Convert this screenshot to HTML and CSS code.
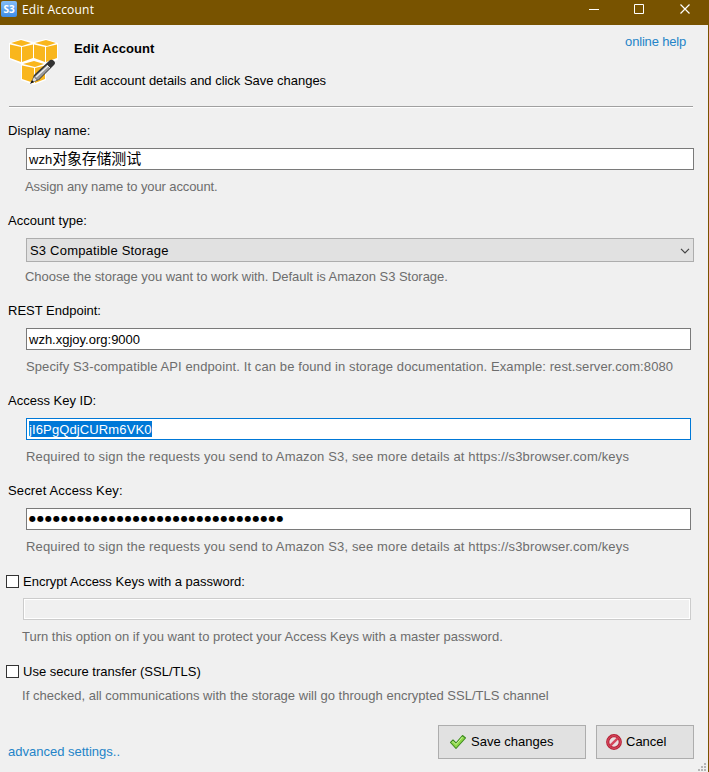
FILE: index.html
```html
<!DOCTYPE html>
<html lang="en">
<head>
<meta charset="utf-8">
<title>Edit Account</title>
<link rel="stylesheet" href="styles.css">
</head>
<body>
<div class="window">
  <header class="titlebar">
    <span class="app-icon">S3</span>
    <span class="title">Edit Account</span>
    <svg class="controls" width="120" height="24" viewBox="0 0 120 24" fill="none" stroke="#fff">
      <path d="M7 9.500h10M52.500 4.500h9v9h-9z"/>
      <path d="M98.500 4.500l9 9M107.500 4.500l-9 9" stroke-width="1.200"/>
    </svg>
  </header>
  <main class="body">
    <section class="intro">
      <svg class="logo" width="50" height="48" viewBox="0 0 50 48">
        <path d="M0 4L12 0l12.500 3L37 0l12 4v17L37 25v16l-12 5-13-5V25L0 20z" fill="#fff"/>
        <g fill="#f9b61d">
          <path d="M2 4l10-3 10 3-9 3zM26 4l11-3 10 3-9 3zM14 25l11-3 10 3-9 3z"/>
          <path d="M1 5.500l11 2.500v15L1 19zM13 8l11-2.500V19l-11 4zM25 5.500L36 8v15l-11-4zM37 8l11-2.500V19l-11 4zM13 26.500L25 29v15l-12-4zM26 29l10-2.500V40l-10 4z"/>
        </g>
        <path d="M22 44l3-8L41 21q2-1 4 1t0 4L30 41z" fill="#333"/>
        <path d="M25 38l13-12 3 3-12 12z" fill="#999"/>
        <path d="M27 38l12-11" stroke="#eee" stroke-width="1.500"/>
        <path d="M22 44l3-6 3 3z" fill="#ddd"/>
        <path d="M21 45l2-4 2 2z" fill="#111"/>
        <path d="M38 26l3 3" stroke="#ddd"/>
      </svg>
      <div class="intro-text">
        <h1>Edit Account</h1>
        <p>Edit account details and click Save changes</p>
      </div>
      <a class="help">online help</a>
    </section>
    <hr>
    <section class="field">
      <label>Display name:</label>
      <div class="input wide">wzh<span class="cjk">对象存储测试</span></div>
      <p class="hint name-hint">Assign any name to your account.</p>
    </section>
    <section class="field">
      <label>Account type:</label>
      <div class="select wide"><span>S3 Compatible Storage</span>
        <svg width="10" height="6" viewBox="0 0 10 6" fill="none" stroke="#444" stroke-width="1.200"><path d="M1 .8l4 4 4-4"/></svg>
      </div>
      <p class="hint type-hint">Choose the storage you want to work with. Default is Amazon S3 Storage.</p>
    </section>
    <section class="field">
      <label>REST Endpoint:</label>
      <div class="input">wzh.xgjoy.org:9000</div>
      <p class="hint endpoint-hint">Specify S3-compatible API endpoint. It can be found in storage documentation. Example: rest.server.com:8080</p>
    </section>
    <section class="field">
      <label>Access Key ID:</label>
      <div class="input focus"><span class="selected">jI6PgQdjCURm6VK0</span></div>
      <p class="hint key-hint">Required to sign the requests you send to Amazon S3, see more details at https://s3browser.com/keys</p>
    </section>
    <section class="field">
      <label class="secret-label">Secret Access Key:</label>
      <div class="input secret">●●●●●●●●●●●●●●●●●●●●●●●●●●●●●●●●</div>
      <p class="hint key-hint">Required to sign the requests you send to Amazon S3, see more details at https://s3browser.com/keys</p>
    </section>
    <section class="field option">
      <label class="check"><i></i><span>Encrypt Access Keys with a password:</span></label>
      <div class="input disabled"></div>
      <p class="hint">Turn this option on if you want to protect your Access Keys with a master password.</p>
    </section>
    <section class="option secure">
      <label class="check"><i></i><span>Use secure transfer (SSL/TLS)</span></label>
      <p class="hint">If checked, all communications with the storage will go through encrypted SSL/TLS channel</p>
    </section>
    <footer>
      <a class="advanced">advanced settings..</a>
      <div class="button save">
        <svg width="18" height="16" viewBox="0 0 18 16"><path d="M1.500 8.500l2.500-2.500 3 3 6.500-7.500 3 2.500L7 14.500z" fill="#8ed848" stroke="#3c8a20" stroke-width="1.100" stroke-linejoin="round"/><path d="M3 8.500l1-1 3 3 6.500-7.500" fill="none" stroke="#c9f59b"/></svg>
        <span>Save changes</span>
      </div>
      <div class="button cancel">
        <svg width="16" height="16" viewBox="0 0 16 16" fill="none"><circle cx="8" cy="8" r="6.300" fill="#e9dfe1" stroke="#b52336" stroke-width="3.200"/><path d="M4.300 11.700l7.400-7.400" stroke="#d5455a" stroke-width="2.400"/><circle cx="8" cy="8" r="6.300" stroke="#e0506a" stroke-width="1"/></svg>
        <span>Cancel</span>
      </div>
    </footer>
    <svg class="grip" width="8" height="8" viewBox="0 0 8 8" fill="#b5b5b5"><path d="M6 0h2v2H6zM3 3h2v2H3zM6 3h2v2H6zM0 6h2v2H0zM3 6h2v2H3zM6 6h2v2H6z"/></svg>
  </main>
</div>
</body>
</html>
```
FILE: styles.css
```css
* { box-sizing: border-box; }
body {
  margin: 0;
  font: 13px/18px "Liberation Sans", "Noto Sans CJK SC", sans-serif;
  color: #000;
  background: #f0f0f0;
}
h1, p { margin: 0; font-size: 13px; }
.window {
  position: relative;
  width: 709px;
  height: 772px;
  background: #f0f0f0;
  border-right: 1px solid #785300;
  overflow: hidden;
  white-space: nowrap;
}
.titlebar {
  display: flex;
  height: 25px;
  padding-left: 1px;
  background: #785300;
  color: #fff;
}
.app-icon {
  width: 16px;
  height: 16px;
  margin-top: 1px;
  border-radius: 2px;
  background: linear-gradient(#85bdf5, #3d8de8);
  font: bold 10px/16px "Open Sans", sans-serif;
  text-align: center;
}
.title {
  margin-left: 5px;
  font: 12px/20px "Open Sans", sans-serif;
  letter-spacing: .2px;
}
.controls { margin-left: auto; margin-right: 6px; }
.intro {
  display: flex;
  height: 81px;
  padding: 15px 22px 0 9px;
}
.logo { margin-top: -1px; }
.intro-text { margin-left: 15px; }
.intro h1 { letter-spacing: .07px; }
.intro-text p { margin-top: 14px; letter-spacing: -.02px; }
.help, .advanced { color: #2484c8; }
.help { margin: -7px 0 0 auto; letter-spacing: -.18px; }
hr {
  height: 2px;
  margin: 0 15px 14px 9px;
  border: 0;
  border-top: 1px solid #a0a0a0;
  border-bottom: 1px solid #fff;
}
.field { height: 90px; padding: 0 17px 0 8px; }
.field label { display: block; height: 18px; }
.field .secret-label { letter-spacing: .15px; }
.input, .select {
  display: flex;
  align-items: center;
  height: 22px;
  margin: 8px 0 8px 18px;
  padding: 1px 2px 0;
  background: #fff;
  border: 1px solid #7a7a7a;
}
.wide { margin-right: -3px; }
.select {
  height: 24px;
  padding: 1px 3px 0;
  margin-bottom: 6px;
  justify-content: space-between;
  background: #e1e1e1;
  border-color: #adadad;
  letter-spacing: .2px;
}
.cjk { font: 15px/18px "Noto Sans CJK SC", sans-serif; letter-spacing: -.2px; margin-top: -4px; }
.focus { border-color: #0078d7; padding-top: 0; }
.selected { height: 16px; line-height: 17px; background: #0078d7; color: #fff; letter-spacing: .12px; }
.secret { font: 8px/18px "DejaVu Sans", sans-serif; letter-spacing: 1px; padding-top: 0; }
.hint { margin-left: 18px; color: #6d6d6d; }
.name-hint { margin-left: 17px; letter-spacing: -.1px; }
.type-hint { margin-left: 17px; letter-spacing: -.04px; }
.endpoint-hint { letter-spacing: .105px; }
.key-hint { letter-spacing: .15px; }
.option { padding-left: 6px; }
.field .check, .check { display: flex; align-items: center; height: 18px; }
.check i {
  width: 13px;
  height: 13px;
  margin-right: 4px;
  background: #fff;
  border: 1px solid #333;
}
.check span { margin-top: 1px; }
.disabled {
  margin: 8px 0 8px 17px;
  background: #f0f0f0;
  border-color: #ccc;
  box-shadow: inset 0 0 0 1px #fff;
}
.option .hint { margin-left: 16px; }
.secure .hint { margin-top: 7px; letter-spacing: .015px; }
footer {
  display: flex;
  margin-top: 20px;
  padding: 0 14px 0 8px;
}
.advanced { margin: 18px auto 0 0; }
.button {
  display: flex;
  align-items: center;
  height: 34px;
  background: #e1e1e1;
  border: 1px solid #adadad;
}
.save { width: 148px; padding-left: 10px; gap: 4px; }
.cancel { width: 98px; margin-left: 10px; padding-left: 9px; gap: 4px; }
.grip { position: absolute; right: 2px; bottom: 1px; }
```
